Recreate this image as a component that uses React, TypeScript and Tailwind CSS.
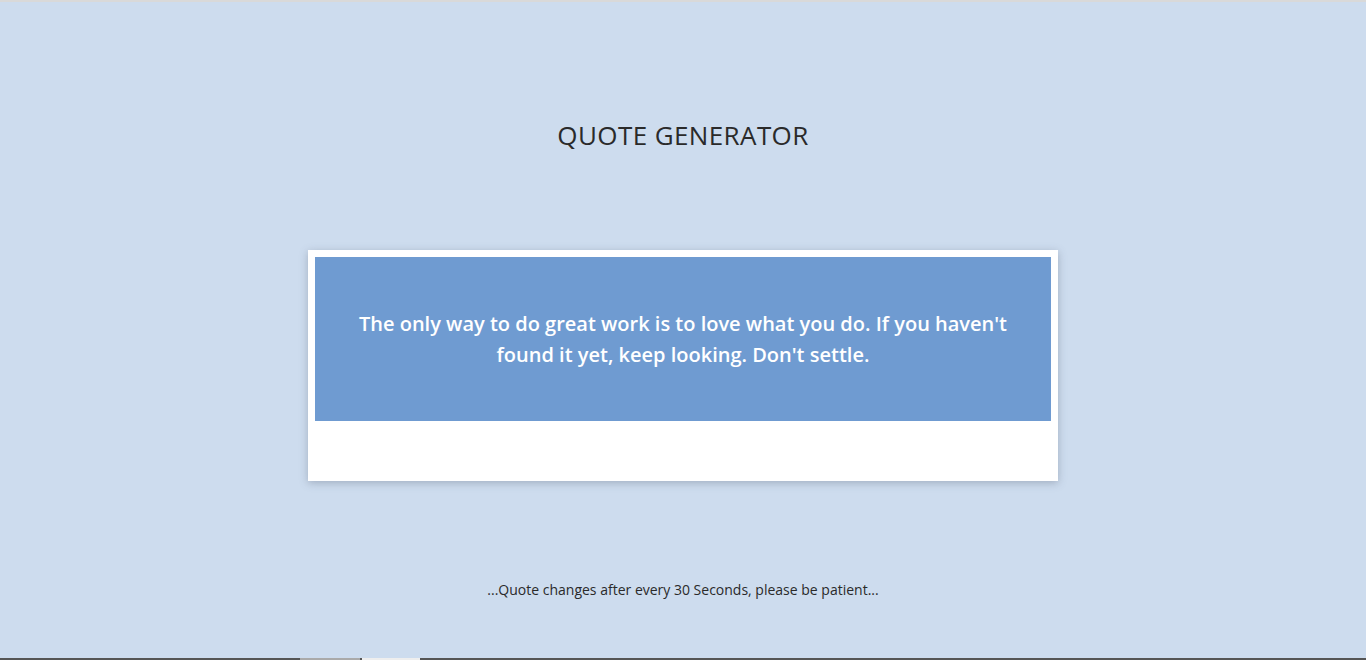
export default function App() {
  return (
    <div className="flex h-[660px] w-full flex-col items-center border-t-2 border-[#d9d9d9] bg-[#cddcee]">
      <h1 className="mt-[117px] font-['Open_Sans',sans-serif] text-[26px] font-medium leading-[32px] tracking-[0.4px] text-[#2a2a2a]">
        QUOTE GENERATOR
      </h1>

      <div className="mt-[99px] w-[750px] bg-white p-[7px] pb-[60px] shadow-[0_2px_8px_rgba(80,90,110,0.35)]">
        <div className="flex h-[164px] items-center justify-center bg-[#6f9bd1] px-[40px] text-center">
          <p className="font-['Open_Sans',sans-serif] text-[20px] font-semibold leading-[31px] text-white">
            The only way to do great work is to love what you do. If you haven't found it yet, keep looking. Don't settle.
          </p>
        </div>
      </div>

      <p className="mt-[100px] font-['Open_Sans',sans-serif] text-[14px] leading-[18px] text-[#2a2a2a]">
        ...Quote changes after every 30 Seconds, please be patient...
      </p>

      <div className="mt-auto flex h-[2px] w-full bg-[#555]">
        <div className="ml-[300px] w-[60px] bg-[#aaa]" />
        <div className="ml-[2px] w-[58px] bg-[#eee]" />
      </div>
    </div>
  );
}
